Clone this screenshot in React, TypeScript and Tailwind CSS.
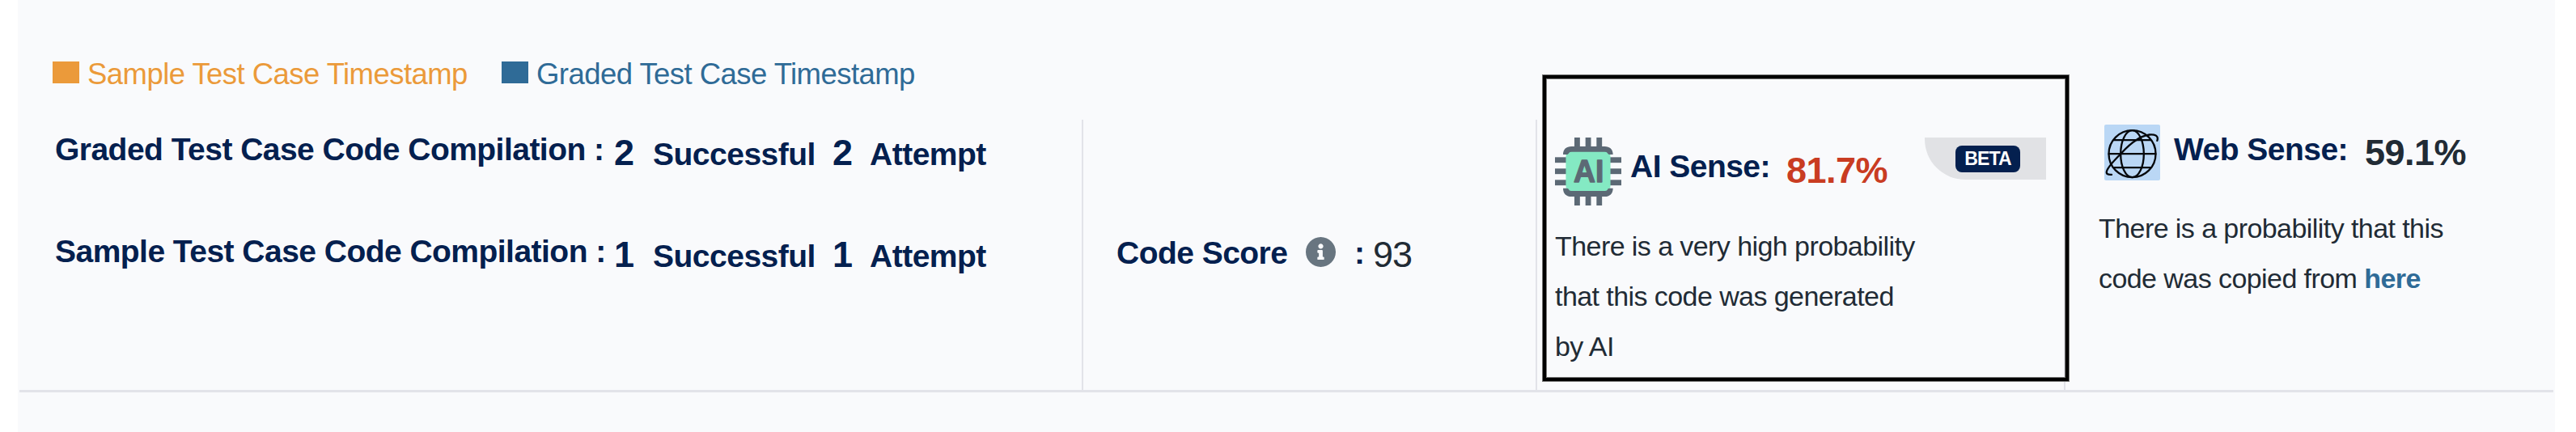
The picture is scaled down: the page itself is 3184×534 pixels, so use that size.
import type { ReactNode } from "react";

const COMPILATION_ROWS = [
  { label: "Graded Test Case Code Compilation :", successful: 2, attempt: 2 },
  { label: "Sample Test Case Code Compilation :", successful: 1, attempt: 1 },
];

function ChipIcon() {
  return (
    <svg viewBox="66 60 246 252" className="h-[84px] w-[82px] shrink-0">
      <g fill="#5c6975">
        {[138, 179, 220].map((x) => (
          <rect key={x} x={x} y="60" width="20.5" height="252" />
        ))}
        {[133, 175, 217].map((y) => (
          <rect key={y} x="66" y={y} width="246" height="20.5" />
        ))}
      </g>
      <rect x="107" y="123" width="164" height="125" fill="#84e9c3" />
      <path
        fill="#5c6975"
        d="M96 123C96 104 108 93 127 93H250C269 93 281 104 281 123ZM96 248C96 268 108 279 127 279H250C269 279 281 268 281 248Z"
      />
      <path
        fill="#84e9c3"
        d="M107 130C110 122 116 122 118 117Q120 113 128 113H250Q258 113 260 117C262 122 268 122 271 130V241C268 249 262 249 260 254Q258 258 250 258H128Q120 258 118 254C116 249 110 249 107 241Z"
      />
      <text
        x="135"
        y="226"
        fontSize="117"
        fontWeight="700"
        fontFamily="Liberation Sans"
        textLength="112"
        lengthAdjust="spacingAndGlyphs"
        fill="#5c6975"
        stroke="#5c6975"
        strokeWidth="4"
        strokeLinejoin="round"
      >
        AI
      </text>
    </svg>
  );
}

function GlobeIcon() {
  return (
    <svg
      viewBox="33 42 207 206"
      className="h-[69px] w-[69px] shrink-0 rounded-xs bg-[#bad7f5]"
      fill="none"
      stroke="#05080c"
      strokeWidth="7"
      strokeLinecap="round"
    >
      <circle cx="136.500" cy="150" r="87" />
      <ellipse cx="136.500" cy="150" rx="43" ry="87" />
      <path d="M50 150H223M70 99H204M70 201H204" />
      <path d="M229 101C236 82 218 77 200 79C178 83 160 92 150 100C125 115 108 135 90 154C68 176 48 196 42 214C39 224 45 228 60 227" />
    </svg>
  );
}

function InfoIcon() {
  return (
    <svg viewBox="8 8 496 496" className="h-[37px] w-[37px] shrink-0" fill="#687580">
      <path d="M256 8C119 8 8 119 8 256s111 248 248 248 248-111 248-248S393 8 256 8zm0 110c23.200 0 42 18.800 42 42s-18.800 42-42 42-42-18.800-42-42 18.800-42 42-42zm56 254c0 6.600-5.400 12-12 12h-88c-6.600 0-12-5.400-12-12v-24c0-6.600 5.400-12 12-12h12v-64h-12c-6.600 0-12-5.400-12-12v-24c0-6.600 5.400-12 12-12h64c6.600 0 12 5.400 12 12v100h12c6.600 0 12 5.400 12 12v24z" />
    </svg>
  );
}

function Title({ children }: { children: ReactNode }) {
  return (
    <h3 className="text-[39px] leading-none font-bold tracking-[-0.53px] text-[#04204f]">{children}</h3>
  );
}

export default function App() {
  return (
    <div className="h-[534px] w-[3184px] overflow-hidden bg-white pr-[26px] pl-[22px] font-['Liberation_Sans',Arial,sans-serif] whitespace-nowrap text-[#212b35]">
      <div className="h-full bg-[#f9fafc] px-0.5">
        {/* Legend */}
        <div className="flex h-[148px] items-start pt-[73px] pl-[41px] text-[36.5px] leading-[37px] tracking-[-0.55px]">
          <div className="flex w-[555px] text-[#eb9a3a]">
            <span className="mt-[3px] mr-[10px] h-[27px] w-[33px] bg-[#eb9a3a]" />
            Sample Test Case Timestamp
          </div>
          <div className="flex text-[#2f6b97]">
            <span className="mt-[3px] mr-[10px] h-[27px] w-[33px] bg-[#2f6b97]" />
            Graded Test Case Timestamp
          </div>
        </div>

        <div className="flex h-[337px] border-b-3 border-[#e2e3e9]">
          {/* Compilation counts */}
          <div className="flex w-[1315px] flex-col gap-[82px] border-r-2 border-[#e2e3e9] pt-[17px] pl-[44px]">
            {COMPILATION_ROWS.map((row) => (
              <div key={row.label} className="flex h-11 items-start">
                <div className="w-[691px]">
                  <Title>{row.label}</Title>
                </div>
                <div className="mt-px flex items-baseline text-[45px] leading-none font-bold tracking-[-0.5px] text-[#04204f]">
                  <span className="w-[48px]">{row.successful}</span>
                  <span className="w-[222px] text-[39px]">Successful</span>
                  <span className="w-[46px]">{row.attempt}</span>
                  <span className="text-[39px]">Attempt</span>
                </div>
              </div>
            ))}
          </div>

          {/* Code score */}
          <div className="flex w-[561px] items-start border-r-2 border-[#e2e3e9] pt-[145px] pl-[41px]">
            <div className="w-[234px]">
              <Title>Code Score</Title>
            </div>
            <InfoIcon />
            <div className="ml-[23px] w-[23px]">
              <Title>:</Title>
            </div>
            <span className="-mt-px text-[45px] leading-none tracking-[-1px]">93</span>
          </div>

          {/* AI sense */}
          <div className="relative w-[653px] border-r-2 border-[#e2e3e9] pt-[22px] pl-[22px]">
            <div className="pointer-events-none absolute top-[-55px] left-[7px] h-[378px] w-[650px] border-4 border-black inset-ring-1 inset-ring-[#777] ring-1 ring-[#777]" />
            <div className="flex items-start">
              <ChipIcon />
              <div className="mt-[16px] ml-[11px] w-[193px]">
                <Title>AI Sense:</Title>
              </div>
              <span className="mt-[18px] w-[171px] text-[45px] leading-none font-bold tracking-[-0.5px] text-[#c93c22]">
                81.7%
              </span>
              <div className="flex h-[52px] w-[150px] rounded-bl-[50px] bg-[#e1e2e5] pt-[10px] pl-[38px]">
                <span className="flex h-[33px] w-[80px] items-center justify-center rounded-lg bg-[#04204f] text-[23px] font-bold tracking-[-0.8px] text-white">
                  BETA
                </span>
              </div>
            </div>
            <p className="mt-[19px] text-[34px] leading-[62px] tracking-[-0.57px]">
              There is a very high probability
              <br />
              that this code was generated
              <br />
              by AI
            </p>
          </div>

          {/* Web sense */}
          <div className="pt-[6px] pl-[41px]">
            <div className="flex items-start pl-[7px]">
              <GlobeIcon />
              <div className="mt-[11px] ml-[17px] w-[236px]">
                <Title>Web Sense:</Title>
              </div>
              <span className="mt-[12px] text-[45px] leading-none font-bold tracking-[-0.5px]">59.1%</span>
            </div>
            <p className="mt-[28px] text-[34px] leading-[62px] tracking-[-0.57px]">
              There is a probability that this
              <br />
              code was copied from{" "}
              <a href="#" className="font-bold text-[#2f6b97]">
                here
              </a>
            </p>
          </div>
        </div>
      </div>
    </div>
  );
}
